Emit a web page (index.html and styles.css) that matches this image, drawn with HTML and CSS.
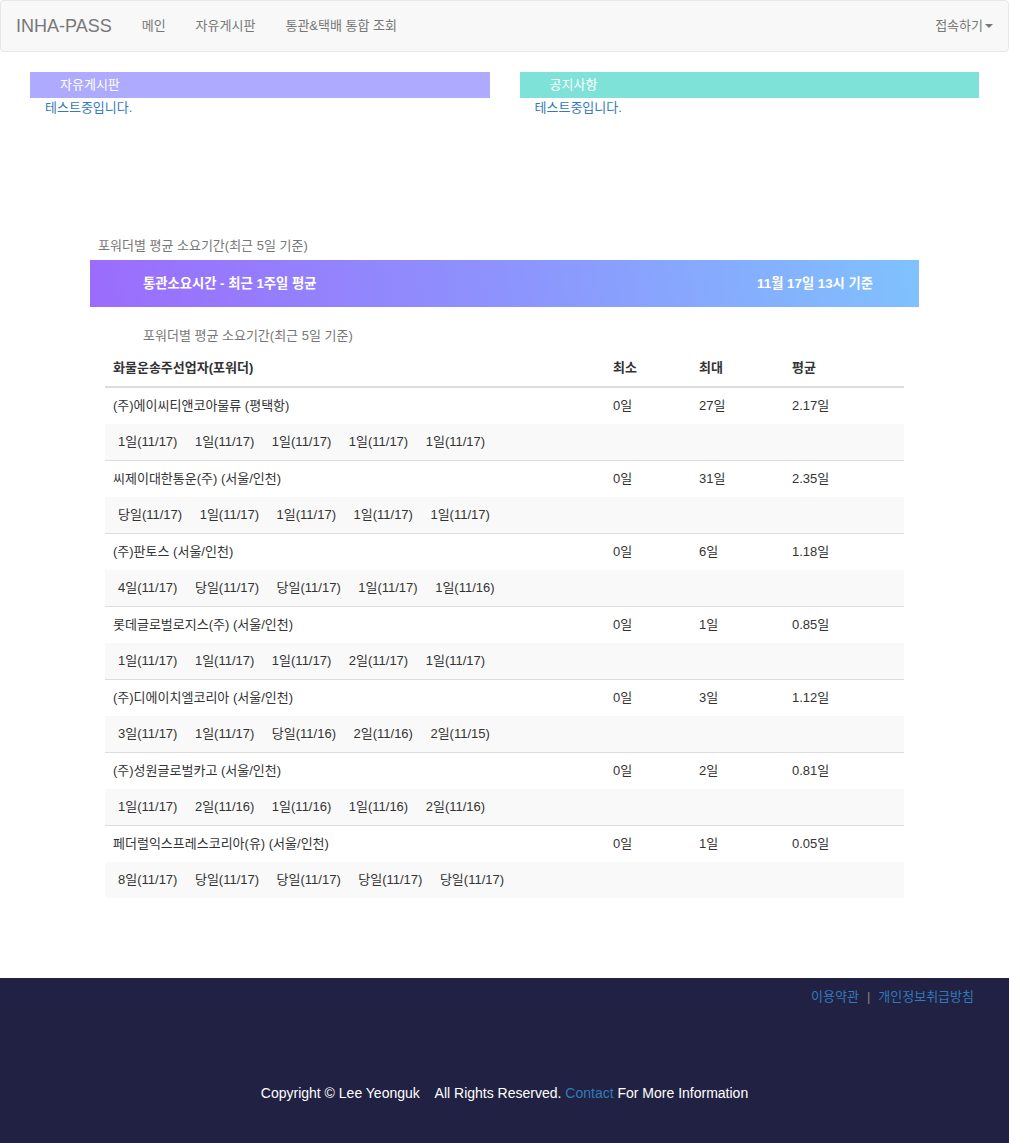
FILE: index.html
```html
<!DOCTYPE html>
<html lang="ko">
<head>
<meta charset="utf-8">
<title>INHA-PASS</title>
<link rel="stylesheet" href="styles.css">
</head>
<body>
<nav class="navbar">
  <div class="nav-left">
    <a class="brand" href="#">INHA-PASS</a>
    <a class="nav-link" href="#">메인</a>
    <a class="nav-link" href="#">자유게시판</a>
    <a class="nav-link" href="#">통관&amp;택배 통합 조회</a>
  </div>
  <a class="nav-link dropdown" href="#">접속하기<span class="caret"></span></a>
</nav>

<section class="boards">
  <div class="board">
    <div class="board-head purple">자유게시판</div>
    <a class="board-item" href="#">테스트중입니다.</a>
  </div>
  <div class="board">
    <div class="board-head mint">공지사항</div>
    <a class="board-item" href="#">테스트중입니다.</a>
  </div>
</section>

<section class="stats">
  <div class="label-top">포워더별 평균 소요기간(최근 5일 기준)</div>
  <div class="banner">
    <span>통관소요시간 - 최근 1주일 평균</span>
    <span>11월 17일 13시 기준</span>
  </div>
  <div class="label-sub">포워더별 평균 소요기간(최근 5일 기준)</div>
  <table class="ftable">
    <colgroup><col class="c-name"><col class="c-min"><col class="c-max"><col class="c-avg"></colgroup>
    <thead>
      <tr><th>화물운송주선업자(포워더)</th><th>최소</th><th>최대</th><th>평균</th></tr>
    </thead>
    <tbody>
      <tr class="main"><td>(주)에이씨티앤코아물류 (평택항)</td><td>0일</td><td>27일</td><td>2.17일</td></tr>
      <tr class="sub"><td colspan="4"><div class="days"><span>1일(11/17)</span><span>1일(11/17)</span><span>1일(11/17)</span><span>1일(11/17)</span><span>1일(11/17)</span></div></td></tr>
      <tr class="main"><td>씨제이대한통운(주) (서울/인천)</td><td>0일</td><td>31일</td><td>2.35일</td></tr>
      <tr class="sub"><td colspan="4"><div class="days"><span>당일(11/17)</span><span>1일(11/17)</span><span>1일(11/17)</span><span>1일(11/17)</span><span>1일(11/17)</span></div></td></tr>
      <tr class="main"><td>(주)판토스 (서울/인천)</td><td>0일</td><td>6일</td><td>1.18일</td></tr>
      <tr class="sub"><td colspan="4"><div class="days"><span>4일(11/17)</span><span>당일(11/17)</span><span>당일(11/17)</span><span>1일(11/17)</span><span>1일(11/16)</span></div></td></tr>
      <tr class="main"><td>롯데글로벌로지스(주) (서울/인천)</td><td>0일</td><td>1일</td><td>0.85일</td></tr>
      <tr class="sub"><td colspan="4"><div class="days"><span>1일(11/17)</span><span>1일(11/17)</span><span>1일(11/17)</span><span>2일(11/17)</span><span>1일(11/17)</span></div></td></tr>
      <tr class="main"><td>(주)디에이치엘코리아 (서울/인천)</td><td>0일</td><td>3일</td><td>1.12일</td></tr>
      <tr class="sub"><td colspan="4"><div class="days"><span>3일(11/17)</span><span>1일(11/17)</span><span>당일(11/16)</span><span>2일(11/16)</span><span>2일(11/15)</span></div></td></tr>
      <tr class="main"><td>(주)성원글로벌카고 (서울/인천)</td><td>0일</td><td>2일</td><td>0.81일</td></tr>
      <tr class="sub"><td colspan="4"><div class="days"><span>1일(11/17)</span><span>2일(11/16)</span><span>1일(11/16)</span><span>1일(11/16)</span><span>2일(11/16)</span></div></td></tr>
      <tr class="main"><td>페더럴익스프레스코리아(유) (서울/인천)</td><td>0일</td><td>1일</td><td>0.05일</td></tr>
      <tr class="sub"><td colspan="4"><div class="days"><span>8일(11/17)</span><span>당일(11/17)</span><span>당일(11/17)</span><span>당일(11/17)</span><span>당일(11/17)</span></div></td></tr>
    </tbody>
  </table>
</section>

<footer class="footer">
  <div class="footer-links"><a href="#">이용약관</a><span class="sep">|</span><a href="#">개인정보취급방침</a></div>
  <div class="copyright">Copyright © Lee Yeonguk &nbsp;&nbsp; All Rights Reserved. <a href="#">Contact</a> For More Information</div>
</footer>
</body>
</html>
```

FILE: styles.css
```css
* { box-sizing: border-box; }
html, body { margin: 0; padding: 0; }
body {
  font-family: "Liberation Sans", "Noto Sans CJK KR", sans-serif;
  font-size: 14px;
  line-height: 20px;
  color: #333;
  background: #fff;
}
a { text-decoration: none; color: #337ab7; }

.navbar {
  display: flex;
  justify-content: space-between;
  align-items: center;
  height: 52px;
  background: #f8f8f8;
  border: 1px solid #e7e7e7;
  border-radius: 4px;
}
.nav-left { display: flex; align-items: center; }
.brand {
  font-size: 18px;
  color: #777;
  padding: 15px 15px;
  line-height: 20px;
}
.nav-link {
  color: #777;
  font-size: 13px;
  padding: 15px 15px;
  line-height: 20px;
}
.dropdown { display: flex; align-items: center; }
.caret {
  display: inline-block;
  width: 0; height: 0;
  margin-left: 2px;
  border-top: 4px solid #777;
  border-left: 4px solid transparent;
  border-right: 4px solid transparent;
}

.boards {
  display: flex;
  gap: 30px;
  padding: 0 30px;
  margin-top: 20px;
}
.board { flex: 1; }
.board-head {
  height: 26px;
  line-height: 26px;
  padding-left: 30px;
  color: #fff;
  font-size: 13px;
}
.purple { background: #aeaafe; }
.mint { background: #7fe2d8; }
.board-item {
  display: block;
  padding-left: 15px;
  font-size: 13px;
  line-height: 20px;
}

.stats {
  width: 829px;
  margin: 118px 0 0 90px;
}
.label-top {
  color: #777;
  font-size: 13px;
  padding-left: 8px;
  line-height: 20px;
}
.banner {
  margin-top: 4px;
  height: 47px;
  display: flex;
  align-items: center;
  justify-content: space-between;
  padding: 0 46px 0 53px;
  color: #fff;
  font-weight: bold;
  font-size: 13.3px;
  background: linear-gradient(80deg, #9b6cfc 0%, #8d93fd 50%, #7fc2fe 100%);
}
.label-sub {
  color: #777;
  font-size: 13px;
  padding-left: 53px;
  margin-top: 19px;
  line-height: 20px;
}
.ftable {
  width: 799px;
  margin: 4px 15px 0;
  border-collapse: collapse;
  font-size: 13px;
}
.c-name { width: 500px; }
.c-min { width: 86px; }
.c-max { width: 93px; }
.c-avg { width: 120px; }
.ftable th {
  text-align: left;
  font-weight: bold;
  padding: 8px;
  line-height: 20px;
  border-bottom: 2px solid #ddd;
}
.ftable td {
  padding: 8px;
  line-height: 20px;
}
.ftable tr.main td { border-top: 1px solid #ddd; }
.ftable tbody tr.main:first-child td { border-top: none; }
.ftable tr.sub td { background: #f9f9f9; }
.days { display: flex; gap: 17.5px; padding-left: 5px; }

.footer {
  margin-top: 80px;
  height: 165px;
  background: #212243;
  display: flex;
  flex-direction: column;
}
.footer-links {
  align-self: flex-end;
  padding: 9px 35px 0 0;
  font-size: 13px;
  line-height: 20px;
}
.footer-links .sep { color: #888; margin: 0 8px; }
.copyright {
  margin-top: 76px;
  text-align: center;
  color: #fff;
  font-size: 14px;
  line-height: 20px;
}
```
